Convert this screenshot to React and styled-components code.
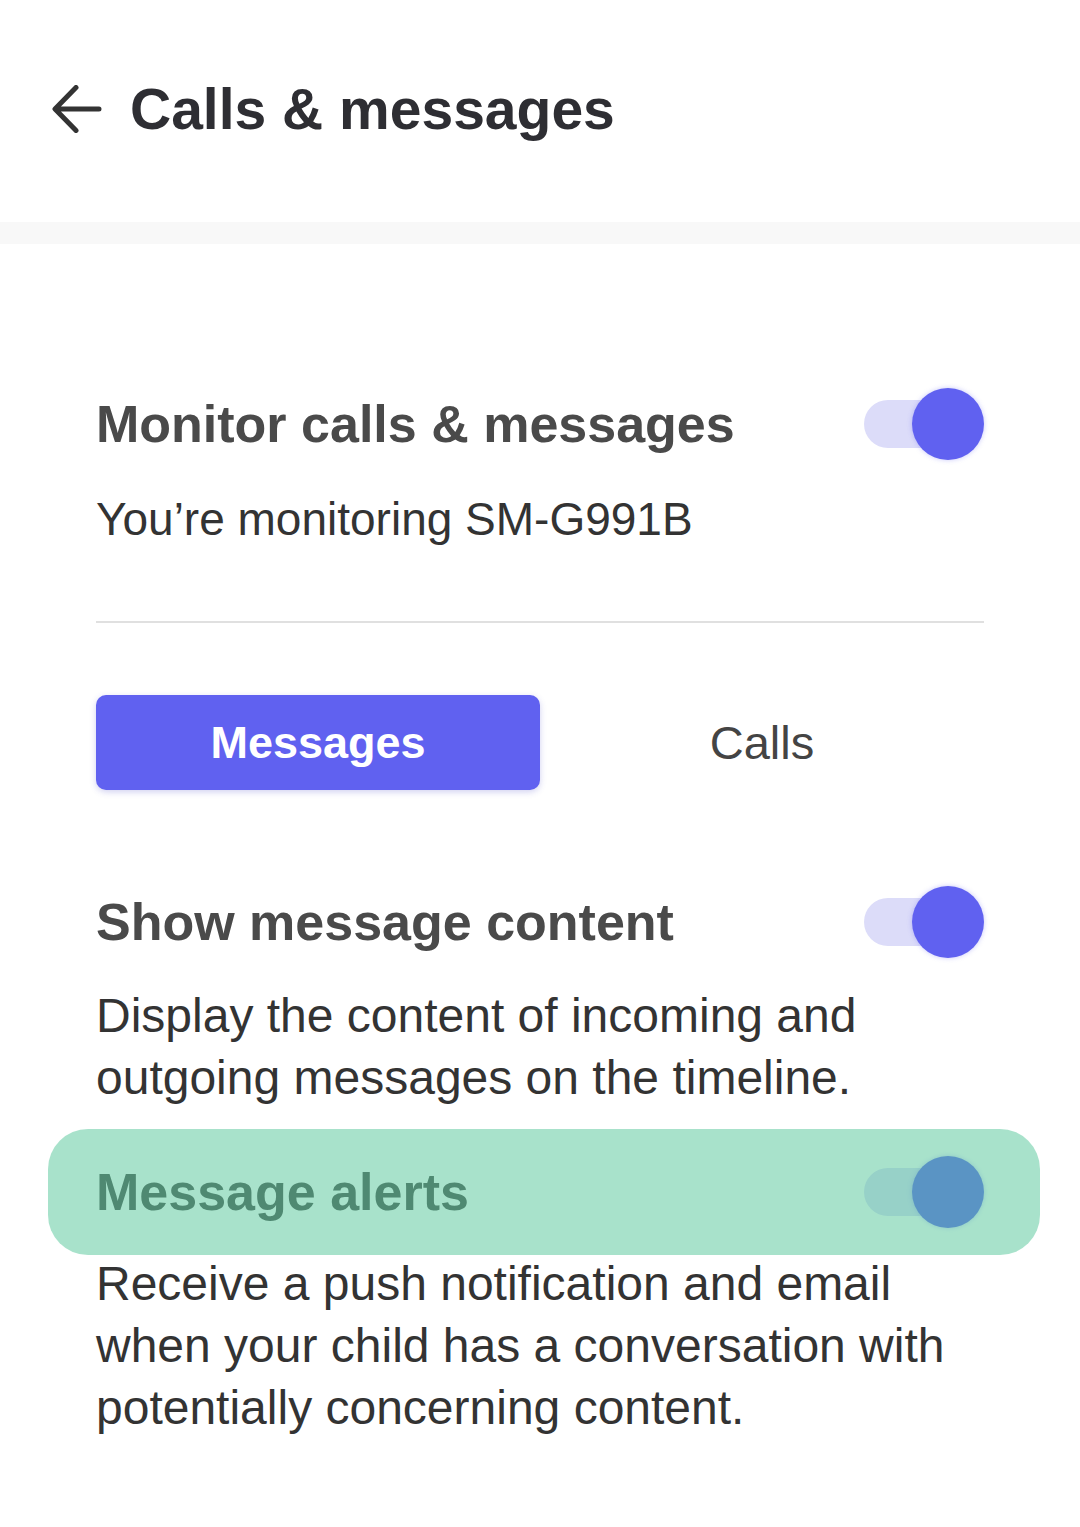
import React, { useState } from 'react';
import styled, { createGlobalStyle } from 'styled-components';

const GlobalStyle = createGlobalStyle`
  html, body {
    margin: 0;
    padding: 0;
    background: #fff;
  }
  body {
    font-family: 'Liberation Sans', Arial, sans-serif;
    color: #333;
  }
  * { box-sizing: border-box; }
`;

const Page = styled.div`
  min-height: 1527px;
  background: #fff;
`;

const Header = styled.header`
  height: 222px;
  display: flex;
  align-items: center;
  gap: 28px;
  padding-left: 52px;
  padding-bottom: 4px;
`;

const BackButton = styled.button`
  border: none;
  background: none;
  padding: 0;
  display: flex;
  color: #333;
`;

const Title = styled.h1`
  margin: 0;
  font-size: 57px;
  font-weight: 700;
  color: #2e2e33;
  line-height: 1;
`;

const Band = styled.div`
  height: 22px;
  background: #f8f8f8;
`;

const Content = styled.main`
  padding: 144px 96px 0;
`;

const Row = styled.div`
  position: relative;
  display: flex;
  align-items: center;
  justify-content: space-between;
  height: 72px;
  margin-top: ${p => p.$top || 0}px;

  ${p => p.$highlight && `
    &::after {
      content: '';
      position: absolute;
      top: -27px;
      bottom: -27px;
      left: -48px;
      right: -56px;
      border-radius: 40px;
      background: rgba(84, 198, 153, 0.51);
      pointer-events: none;
    }
  `}
`;

const Heading = styled.h2`
  margin: 0;
  font-size: 52px;
  font-weight: 700;
  line-height: 62px;
  color: #4a4a4a;
`;

const Text = styled.p`
  margin: ${p => p.$top || 0}px 0 0;
  font-size: ${p => p.$size || 48}px;
  line-height: 62px;
  color: #333;
`;

const Divider = styled.hr`
  margin: 71px 0 0;
  border: none;
  height: 2px;
  background: #e0e0e0;
`;

const Tabs = styled.div`
  margin-top: 72px;
  display: grid;
  grid-template-columns: 1fr 1fr;
  height: 95px;
`;

const Tab = styled.button`
  border: none;
  border-radius: 10px;
  font-family: 'Liberation Sans', Arial, sans-serif;
  background: ${p => (p.$active ? '#6061f0' : 'transparent')};
  color: ${p => (p.$active ? '#fff' : '#444')};
  font-size: ${p => (p.$active ? 45 : 47)}px;
  font-weight: ${p => (p.$active ? 700 : 400)};
  box-shadow: ${p => (p.$active ? '0 2px 6px rgba(70, 70, 200, 0.25)' : 'none')};
  cursor: pointer;
`;

const SwitchBox = styled.button`
  position: relative;
  width: 120px;
  height: 72px;
  border: none;
  background: none;
  padding: 0;
  flex-shrink: 0;
  cursor: pointer;
`;

const Track = styled.span`
  position: absolute;
  left: 0;
  right: 10px;
  top: 12px;
  height: 48px;
  border-radius: 24px;
  background: ${p => (p.$on ? '#dcdcf9' : '#e4e4e4')};
`;

const Knob = styled.span`
  position: absolute;
  top: 0;
  ${p => (p.$on ? 'right: 0;' : 'left: 0;')}
  width: 72px;
  height: 72px;
  border-radius: 50%;
  background: ${p => (p.$on ? '#6061f0' : '#fafafa')};
  box-shadow: 0 0 5px rgba(96, 97, 240, 0.35);
`;

function Switch({ on, onChange }) {
  return (
    <SwitchBox onClick={() => onChange(!on)}>
      <Track $on={on} />
      <Knob $on={on} />
    </SwitchBox>
  );
}

export default function App() {
  const [monitor, setMonitor] = useState(true);
  const [content, setContent] = useState(true);
  const [alerts, setAlerts] = useState(true);
  const [tab, setTab] = useState('messages');

  return (
    <Page>
      <GlobalStyle />
      <Header>
        <BackButton aria-label="Back">
          <svg width="50" height="48" viewBox="0 0 50 48" fill="none">
            <path
              d="M47 24H4M24 2.5L3 24l21 21.5"
              stroke="#333"
              strokeWidth="5"
              strokeLinecap="round"
              strokeLinejoin="round"
            />
          </svg>
        </BackButton>
        <Title>Calls &amp; messages</Title>
      </Header>
      <Band />

      <Content>
        <Row>
          <Heading>Monitor calls &amp; messages</Heading>
          <Switch on={monitor} onChange={setMonitor} />
        </Row>
        <Text $top={28} $size={46}>You’re monitoring SM-G991B</Text>

        <Divider />

        <Tabs>
          <Tab $active={tab === 'messages'} onClick={() => setTab('messages')}>
            Messages
          </Tab>
          <Tab $active={tab === 'calls'} onClick={() => setTab('calls')}>
            Calls
          </Tab>
        </Tabs>

        <Row $top={96}>
          <Heading>Show message content</Heading>
          <Switch on={content} onChange={setContent} />
        </Row>
        <Text $top={27}>
          Display the content of incoming and outgoing messages on the timeline.
        </Text>

        <Row $top={47} $highlight>
          <Heading>Message alerts</Heading>
          <Switch on={alerts} onChange={setAlerts} />
        </Row>
        <Text $top={25}>
          Receive a push notification and email when your child has a
          conversation with potentially concerning content.
        </Text>
      </Content>
    </Page>
  );
}
